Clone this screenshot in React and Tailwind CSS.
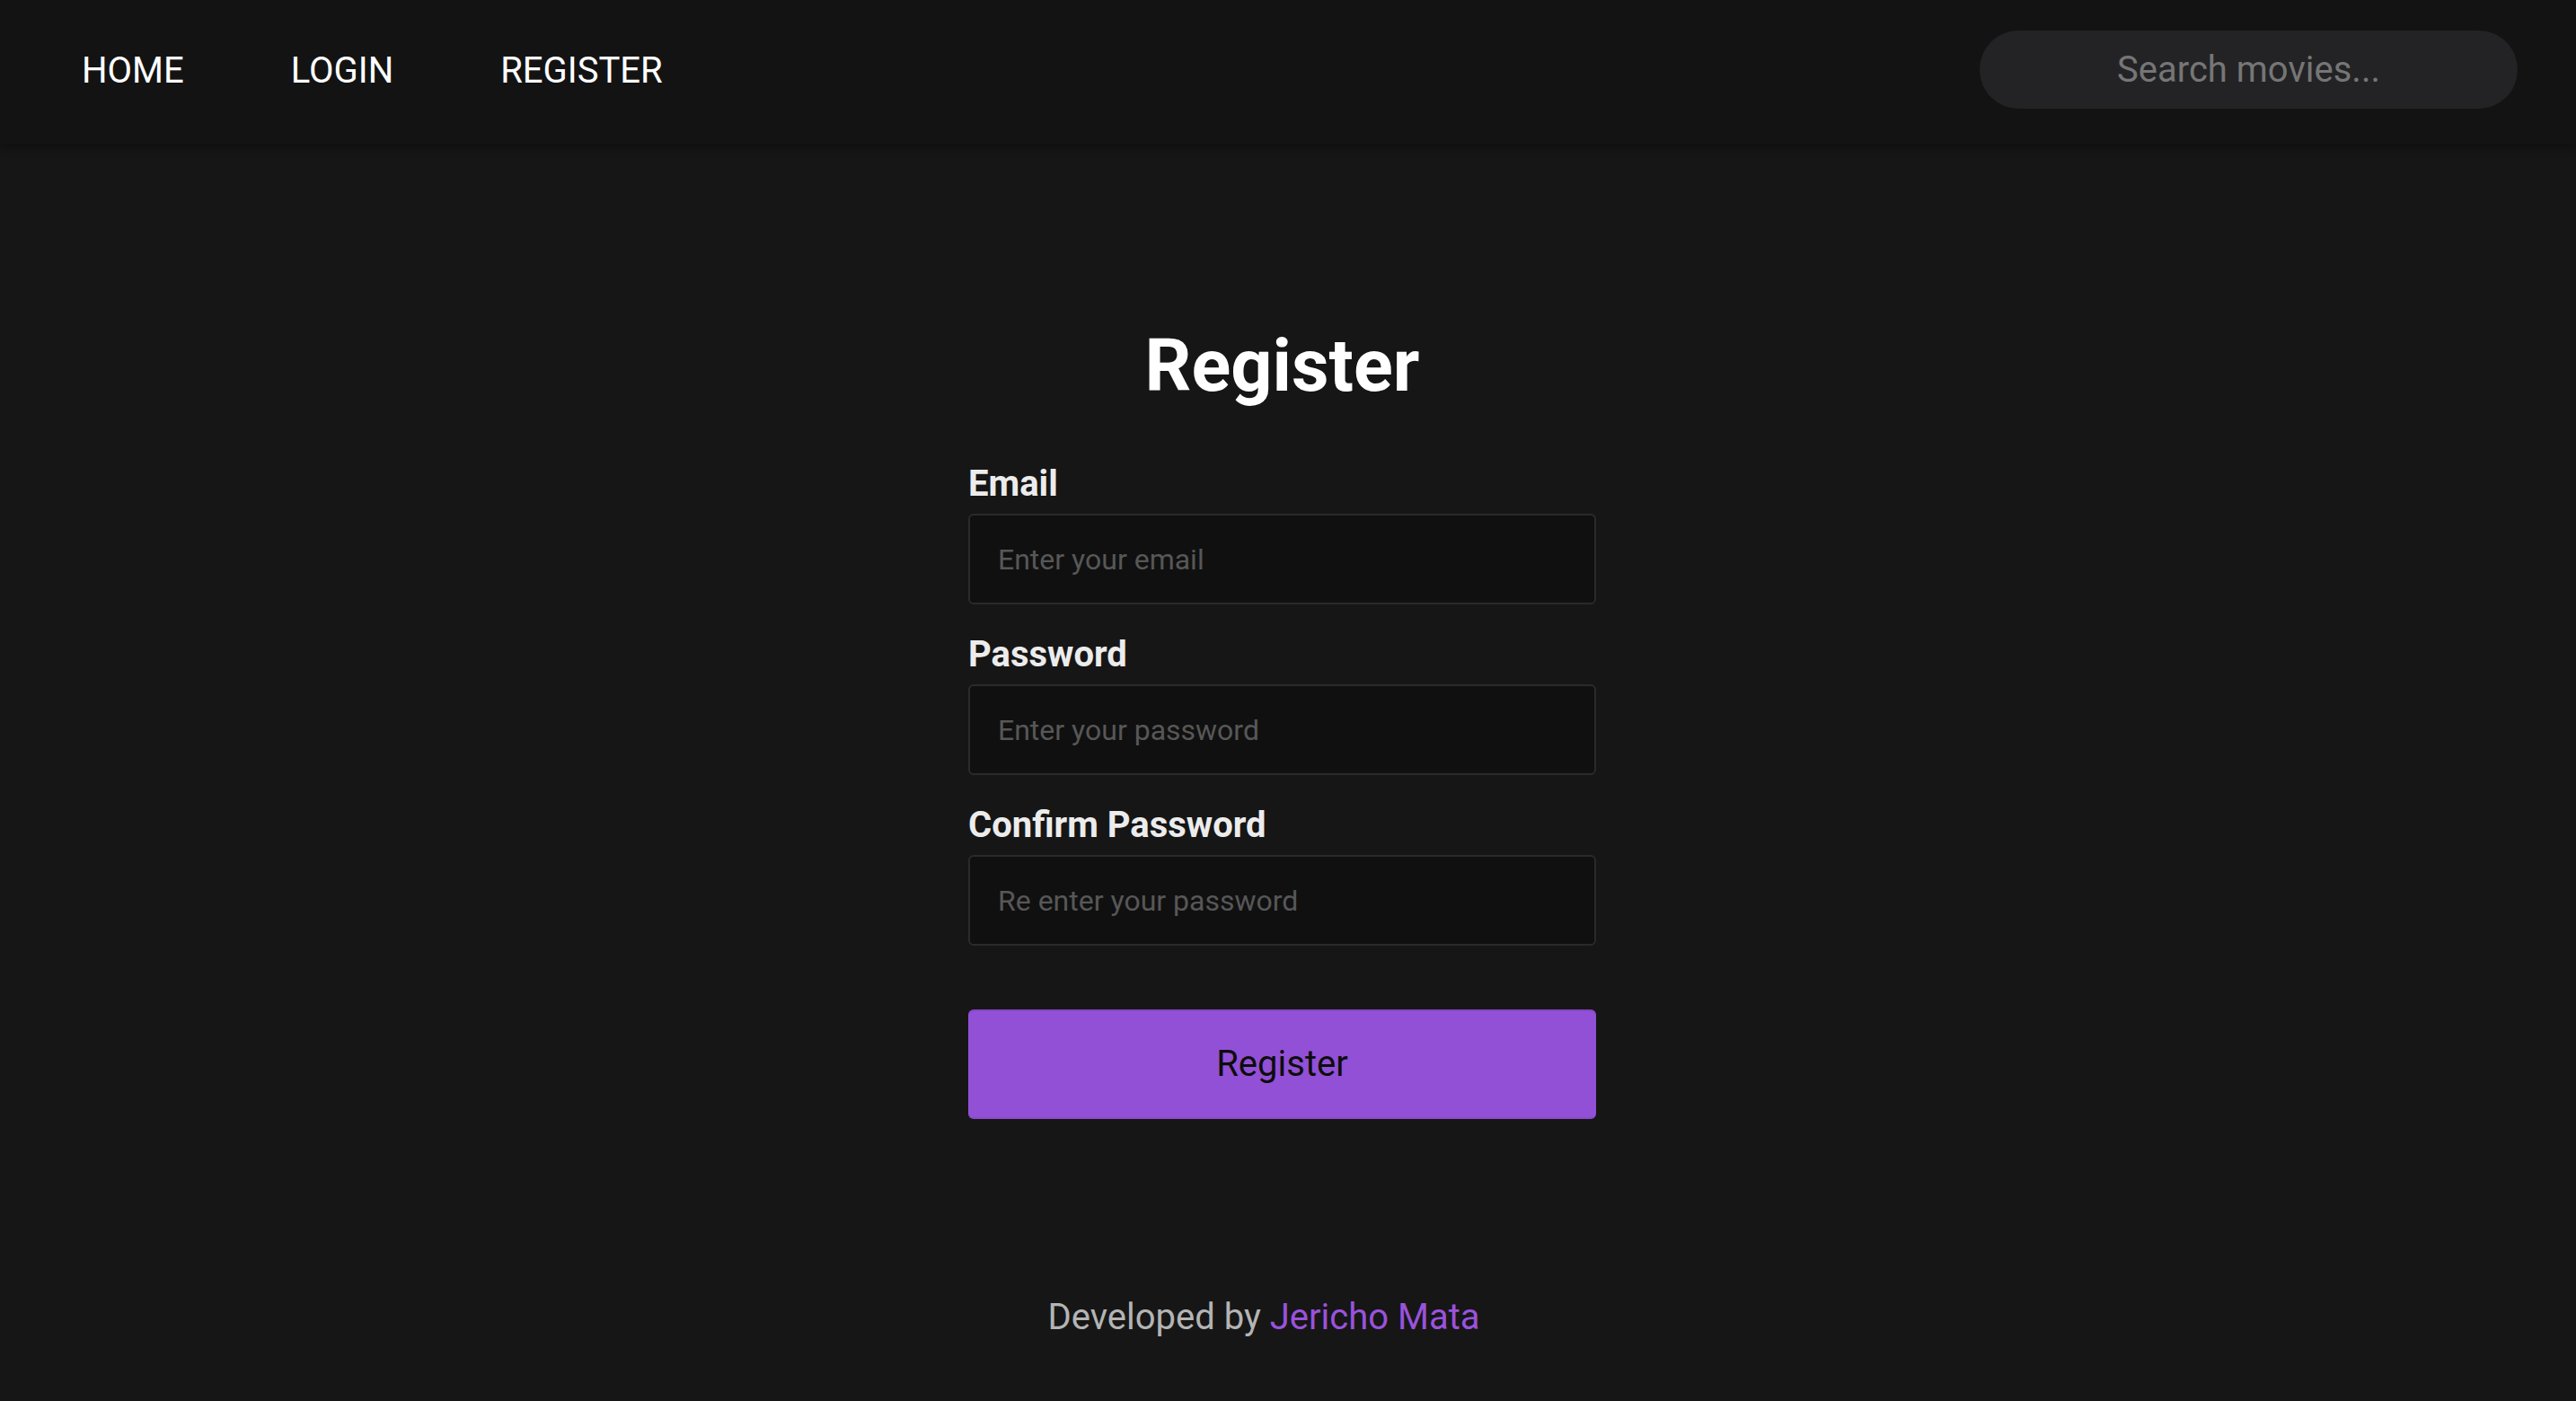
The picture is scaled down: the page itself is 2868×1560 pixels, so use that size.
import { useState } from 'react';

const Field = ({ label, type, placeholder, value, onChange }) => (
  <div className="flex flex-col">
    <label className="mb-[10px] text-[40px] font-bold leading-[47px] text-[#ececec]">{label}</label>
    <input
      type={type}
      value={value}
      onChange={onChange}
      placeholder={placeholder}
      className="h-[101px] w-full rounded-[6px] border-2 border-[#2a2a2a] bg-[#101010] px-[31px] text-[32px] text-white outline-none placeholder:text-[#575757]"
    />
  </div>
);

const App = () => {
  const [email, setEmail] = useState('');
  const [password, setPassword] = useState('');
  const [confirm, setConfirm] = useState('');
  const [search, setSearch] = useState('');

  return (
    <div className="flex min-h-[1560px] flex-col bg-[#161616] font-['Roboto',sans-serif]">
      {/* top nav */}
      <nav className="relative z-10 flex h-[160px] items-center justify-between bg-[#131313] pl-[91px] pr-[65px] shadow-[0_4px_10px_rgba(0,0,0,0.35)]">
        <div className="mb-[2px] flex items-center gap-[119px] text-[40px] leading-none text-white">
          <a href="#">HOME</a>
          <a href="#">LOGIN</a>
          <a href="#">REGISTER</a>
        </div>
        <input
          value={search}
          onChange={(e) => setSearch(e.target.value)}
          placeholder="Search movies..."
          className="mb-[6px] h-[87px] w-[599px] rounded-full bg-[#232325] px-8 text-center text-[40px] text-white outline-none placeholder:text-[#767676]"
        />
      </nav>

      <main className="flex flex-1 flex-col items-center pr-[13px] pt-[200px]">
        <h1 className="text-[81px] font-bold leading-[96px] text-white">Register</h1>
        <form
          className="mt-[59px] flex w-[699px] flex-col gap-[32px]"
          onSubmit={(e) => e.preventDefault()}
        >
          <Field label="Email" type="email" placeholder="Enter your email" value={email} onChange={(e) => setEmail(e.target.value)} />
          <Field label="Password" type="password" placeholder="Enter your password" value={password} onChange={(e) => setPassword(e.target.value)} />
          <Field label="Confirm Password" type="password" placeholder="Re enter your password" value={confirm} onChange={(e) => setConfirm(e.target.value)} />
          <button
            type="submit"
            className="mt-[39px] h-[122px] rounded-[6px] border-t-2 border-b-2 border-t-[#8646c8] border-b-[#8a4cc9] bg-[#9250d6] text-[40px] text-[#0d0d0d]"
          >
            Register
          </button>
        </form>
      </main>

      <footer className="pb-[69px] pr-[54px] text-center text-[40px] leading-[48px] text-[#b4b4b4]">
        Developed by <a href="#" className="text-[#9a52dc]">Jericho Mata</a>
      </footer>
    </div>
  );
};

export default App;
